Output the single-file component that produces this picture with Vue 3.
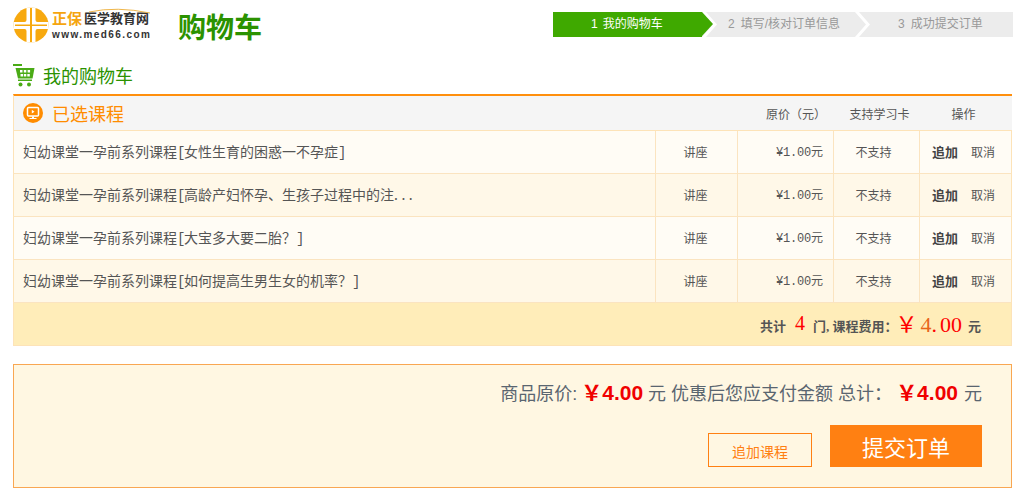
<script setup>
const rows = [
  { text: '女性生育的困惑一不孕症', close: true },
  { text: '高龄产妇怀孕、生孩子过程中的注', close: false },
  { text: '大宝多大要二胎？', close: true },
  { text: '如何提高生男生女的机率？', close: true }
]
</script>

<template>
  <div class="page">
    <header class="top">
      <div class="logo">
        <svg class="logo-mark" width="36" height="36" viewBox="0 0 36 36">
          <circle cx="18" cy="18" r="17.500" fill="#f7a90f" />
          <path d="M13.500 0.500h9V13a2 2 0 0 0 2 2H35.500v7H24.500a2 2 0 0 0-2 2V35.500h-9V24a2 2 0 0 0-2-2H0.500v-7H11.500a2 2 0 0 0 2-2z" fill="#fff" />
          <path d="M17 1h2v16.500h15v1.500H19v16h-2V19H2v-1.500h15z" fill="#f7a90f" />
        </svg>
        <div class="logo-text">
          <svg class="logo-arc" width="100" height="8" viewBox="0 0 100 8"><path d="M37 5Q65-1 98 6" fill="none" stroke="#efb64a" stroke-width="1" /></svg>
          <div class="logo-line"><span class="logo-brand">正保</span><span class="logo-name">医学教育网</span></div>
          <div class="logo-url">www.med66.com</div>
        </div>
      </div>
      <h1 class="title">购物车</h1>
      <ol class="steps">
        <li class="step step-on"><span class="num">1</span>我的购物车</li>
        <li class="step step-mid"><span class="num">2</span>填写/核对订单信息</li>
        <li class="step step-end"><span class="num">3</span>成功提交订单</li>
      </ol>
    </header>

    <div class="sub">
      <svg class="cart-icon" width="22" height="24" viewBox="0 0 22 24">
        <path d="M0 0h9v2H0z" fill="#4aab16" />
        <path d="M2.500 4h19l-2 10.500H5z" fill="#4aab16" />
        <path d="M7 6h2.500v2.500H7zM10.800 6h2.500v2.500h-2.500zM14.600 6h2.500v2.500h-2.500zM7.500 10h2.500v2.500H7.500zM10.800 10h2.500v2.500h-2.500zM14.300 10h2.500v2.500h-2.500z" fill="#fff" />
        <path d="M5 15.500h14V17H5z" fill="#4aab16" />
        <circle cx="7.500" cy="20.500" r="2" fill="#4aab16" />
        <circle cx="16" cy="20.500" r="2" fill="#4aab16" />
      </svg>
      <span>我的购物车</span>
    </div>

    <section class="cart">
      <div class="head">
        <div class="head-title">
          <svg width="20" height="20" viewBox="0 0 20 20">
            <circle cx="10" cy="10" r="10" fill="#ff8c00" />
            <rect x="4.500" y="4.500" width="11" height="8.500" rx="1" fill="none" stroke="#fff" stroke-width="1.500" />
            <path d="M8.800 6.800l2.700 1.900-2.700 1.900z" fill="#fff" />
            <path d="M9 13.500h2v1.500H9zM6.500 15h7v1h-7z" fill="#fff" />
          </svg>
          <span>已选课程</span>
        </div>
        <div class="h-price">原价（元）</div>
        <div class="h-card">支持学习卡</div>
        <div class="h-op">操作</div>
      </div>
      <div v-for="(r, i) in rows" :key="i" class="row" :class="{ alt: i % 2 === 1 }">
        <div class="c c-name"><span>妇幼课堂一孕前系列课程<span class="br">[</span>{{ r.text }}<span v-if="r.close" class="br">]</span><span v-else class="dots">...</span></span></div>
        <div class="c c-type">讲座</div>
        <div class="c c-price"><span><span class="mono">¥1.00</span>元</span></div>
        <div class="c c-card">不支持</div>
        <div class="c c-op"><b>追加</b><span>取消</span></div>
      </div>
      <div class="sum">
        <span>共计</span><em class="n">4</em><span>门, 课程费用：</span><em class="yen">￥<i>4</i>.<span class="zeros">00</span></em><span>元</span>
      </div>
    </section>

    <section class="pay">
      <p class="pay-line">
        <span>商品原价:</span><strong class="p1">￥4.00</strong><span>元 优惠后您应支付金额 总计：</span><strong class="p2">￥4.00</strong><span>元</span>
      </p>
      <div class="actions">
        <a class="more">追加课程</a>
        <a class="submit">提交订单</a>
      </div>
    </section>
  </div>
</template>

<style scoped>
.page { width: 1023px; height: 495px; overflow: hidden; box-sizing: border-box; padding: 0 10px 0 13px; font-family: "Liberation Serif", "Noto Sans CJK SC", serif; font-size: 12px; color: #555; background: #fff; }
.top { height: 50px; display: flex; align-items: flex-start; position: relative; }
.logo { width: 165px; display: flex; padding-top: 7px; position: relative; }
.logo-mark { margin-right: 3px; flex: none; }
.logo-text { position: relative; font-family: "Liberation Sans", "Noto Sans CJK SC", sans-serif; padding-top: 4px; }
.logo-arc { position: absolute; left: 0; top: 0; }
.logo-line { display: flex; align-items: flex-end; height: 16px; line-height: 16px; white-space: nowrap; }
.logo-brand { font-size: 15px; font-weight: 700; color: #f5a50f; }
.logo-name { font-size: 13px; font-weight: 700; color: #333; margin-left: 2px; }
.logo-url { font-size: 10px; font-weight: 700; color: #333; letter-spacing: 1.430px; line-height: 12px; margin-top: 2px; white-space: nowrap; }
.title { margin: 8px 0 0; width: 375px; font-family: "Noto Sans CJK SC", sans-serif; font-size: 28px; line-height: 36px; font-weight: 700; color: #2b9200; }
.steps { list-style: none; margin: 12px 0 0; padding: 0; width: 460px; height: 25px; display: flex; background: #ececec; font-family: "Liberation Sans", "Noto Sans CJK SC", sans-serif; color: #999; line-height: 25px; position: relative; overflow: hidden; }
.step { height: 25px; white-space: nowrap; flex: none; position: relative; }
.num { margin-right: 6px; }
.step-on .num { margin-right: 5px; }
.step-on { width: 149px; background: #3fa900; color: #fff; padding-left: 38px; box-sizing: border-box; }
.step-on::after { content: ""; position: absolute; left: 149px; top: 0; border-left: 11px solid #3fa900; border-top: 12.500px solid transparent; border-bottom: 12.500px solid transparent; z-index: 2; }
.step-mid { width: 153px; padding-left: 26px; box-sizing: border-box; }
.step-mid::before, .step-mid::after { content: ""; position: absolute; top: 0; width: 15px; height: 25px; background: #fff; clip-path: polygon(0 0, 4px 0, 15px 50%, 4px 100%, 0 100%, 11px 50%); z-index: 1; }
.step-mid::before { left: 0; }
.step-mid::after { left: 153px; }
.step-end { flex: 1; padding-left: 43px; box-sizing: border-box; }
.sub { height: 44px; display: flex; align-items: center; gap: 8px; padding-top: 5px; box-sizing: border-box; font-family: "Noto Sans CJK SC", sans-serif; font-size: 18px; color: #2b9200; }
.cart-icon { margin-top: 3px; }
.cart { width: 999px; }
.head { height: 37px; border-top: 2px solid #ff8f0d; background: #f5f5f5; display: flex; align-items: center; box-sizing: border-box; font-family: "Noto Sans CJK SC", sans-serif; font-size: 12px; color: #555; border-bottom: 1px solid #fde3b8; border-left: 1px solid #fde3b8; }
.head-title { width: 752px; display: flex; align-items: center; gap: 9px; padding-left: 9px; box-sizing: border-box; font-size: 18px; color: #ff8c00; }
.h-price { width: 76px; white-space: nowrap; }
.h-card { width: 75px; text-align: center; }
.h-op { width: 93px; text-align: center; }
.row { height: 43px; display: flex; background: #fffcf5; border-bottom: 1px solid #fbe4c0; box-sizing: border-box; border-left: 1px solid #fde3b8; border-right: 1px solid #fde3b8; font-family: "Noto Sans CJK SC", sans-serif; }
.row.alt { background: #fff8e8; }
.c { display: flex; align-items: center; box-sizing: border-box; border-right: 1px solid #fbe4c0; height: 100%; padding-bottom: 2px; }
.c-name { width: 642px; padding-left: 9px; font-size: 14px; white-space: nowrap; color: #555; }
.br { display: inline-block; width: 7px; text-align: center; font-family: "Liberation Mono", monospace; }
.dots { letter-spacing: 3.500px; }
.c-type { width: 82px; justify-content: center; padding-right: 2px; }
.c-price { width: 96px; justify-content: flex-end; padding-right: 10px; }
.mono { font-family: "Liberation Mono", monospace; font-size: 12px; letter-spacing: -0.200px; }
.c-card { width: 86px; justify-content: center; padding-right: 6px; }
.c-op { flex: 1; border-right: 0; padding-left: 12px; gap: 13px; }
.c-op b { font-weight: 700; color: #444; font-size: 13px; }
.sum { height: 43px; background: #ffedb9; border: 1px solid #fde3b8; border-top: 0; display: flex; align-items: center; justify-content: flex-end; padding: 2px 30px 0 0; box-sizing: border-box; font-family: "Liberation Serif", "Noto Sans CJK SC", serif; font-size: 13px; font-weight: 700; color: #555; white-space: nowrap; }
.sum em { font-style: normal; color: #f00; font-weight: 400; }
.sum .n { font-size: 20px; margin: -3px 8px 0 9px; font-weight: 400; }
.sum .yen { font-size: 22px; margin: -6px 6px 0 -2px; display: flex; align-items: baseline; }
.sum .yen i { font-style: normal; color: #e8641b; margin-left: 3px; }
.zeros { margin-left: 3px; }
.pay { width: 999px; height: 124px; margin-top: 18px; border: 1px solid #f9a752; background: #fff7e2; box-sizing: border-box; padding: 15px 29px 0 0; font-family: "Liberation Sans", "Noto Sans CJK SC", sans-serif; }
.pay-line { margin: 0; height: 26px; font-size: 18px; line-height: 26px; color: #5a6570; white-space: nowrap; display: flex; justify-content: flex-end; align-items: baseline; }
.pay-line strong { color: #f00000; font-size: 21px; font-weight: 700; margin: 0 5px 0 4px; }
.pay-line .p2 { margin-left: 4px; margin-right: 6px; }
.actions { display: flex; justify-content: flex-end; align-items: flex-end; gap: 18px; margin-top: 19px; }
.more { width: 104px; height: 34px; box-sizing: border-box; border: 1px solid #ff8012; color: #ff8012; font-family: "Noto Sans CJK SC", sans-serif; font-size: 14px; line-height: 34px; text-align: center; }
.submit { width: 152px; height: 42px; background: #ff8012; color: #fff; font-family: "Noto Sans CJK SC", sans-serif; font-size: 22px; line-height: 42px; text-align: center; }
</style>
